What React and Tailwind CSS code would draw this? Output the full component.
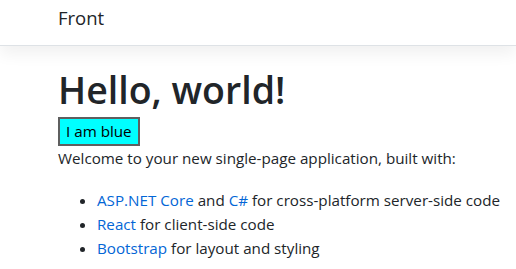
export default function App() {
  return (
    <div className="min-h-screen bg-white text-[#212529] font-['Open_Sans',sans-serif]">
      {/* Navbar */}
      <header className="h-[46px] border-b border-[#dee2e6] bg-white shadow-[0_8px_16px_rgba(0,0,0,0.06)]">
        <div className="pl-[58px] pt-[4px]">
          <a className="text-[18.5px] leading-[28px] text-[#212529]">Front</a>
        </div>
      </header>

      <main className="pl-[58px] pt-[21px]">
        <h1 className="text-[37.5px] leading-[45px] font-semibold">Hello, world!</h1>
        <button className="mt-[5px] bg-[#00ffff] border-2 border-[#5f5f5f] px-[6px] text-[15.2px] leading-[25px] text-black">
          I am blue
        </button>
        <p className="text-[15.2px] leading-[24px]">
          Welcome to your new single-page application, built with:
        </p>
        <ul className="mt-[18px] pl-[39px] list-disc text-[15.2px] leading-[24px]">
          <li>
            <a className="text-[#0366d6]">ASP.NET Core</a> and{" "}
            <a className="text-[#0366d6]">C#</a> for cross-platform server-side code
          </li>
          <li>
            <a className="text-[#0366d6]">React</a> for client-side code
          </li>
          <li>
            <a className="text-[#0366d6]">Bootstrap</a> for layout and styling
          </li>
        </ul>
      </main>
    </div>
  );
}
